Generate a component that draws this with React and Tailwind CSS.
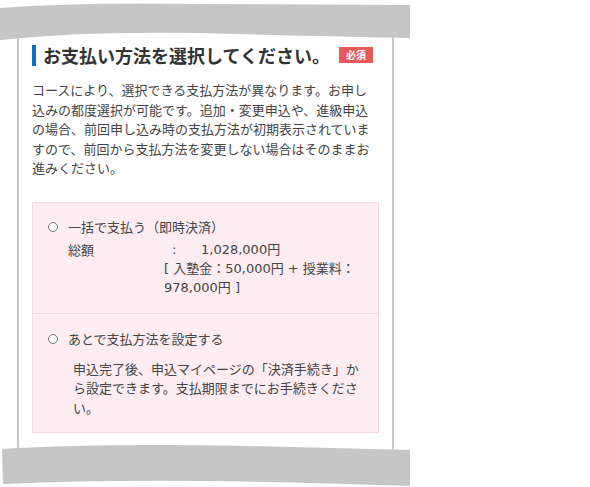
export default function App() {
  const font = { fontFamily: '"Noto Sans CJK JP", "Noto Sans", sans-serif' };
  const num = { fontFamily: '"DejaVu Sans", "Noto Sans CJK JP", sans-serif' };
  return (
    <div className="relative w-[590px] h-[487px] bg-white overflow-hidden" style={font}>
      <div className="ml-[17px] mt-[20px] w-[377px] h-[440px] border-x-2 border-[#c8c8c8] px-[13px] pt-[24px]">
        <div className="flex items-center h-[22px]">
          <div className="w-[4px] h-[21px] bg-[#0a72c4]" />
          <div className="ml-[7px] text-[18px] leading-[22px] font-bold text-[#333333] whitespace-nowrap">
            お支払い方法を選択してください。
          </div>
          <div className="ml-[9px] w-[34px] h-[16px] bg-[#e85a5a] text-white text-[10px] font-bold leading-[16px] text-center">
            必須
          </div>
        </div>
        <p className="mt-[14px] text-[13px] leading-[19.5px] text-[#444444]">
          コースにより、選択できる支払方法が異なります。お申し込みの都度選択が可能です。追加・変更申込や、進級申込の場合、前回申し込み時の支払方法が初期表示されていますので、前回から支払方法を変更しない場合はそのままお進みください。
        </p>
        <div className="mt-[24px] border border-[#efd9df] bg-[#fdedf2] text-[13px] text-[#444444]">
          <div className="pt-[14px] pb-[16px] pl-[15px]">
            <div className="flex items-center h-[20px]">
              <div className="w-[10px] h-[10px] rounded-full border border-[#777777] bg-white" />
              <span className="ml-[10px] leading-[20px]">一括で支払う（即時決済）</span>
            </div>
            <div className="flex mt-[3px] pl-[20px] leading-[19px]">
              <span className="w-[96px] shrink-0">総額</span>
              <div className="whitespace-pre" style={num}>
                <div>
                  <span className="inline-block w-[37px] pl-[8px]">:</span>1,028,000円
                </div>
                <div>[ 入塾金：50,000円 + 授業料：</div>
                <div>978,000円 ]</div>
              </div>
            </div>
          </div>
          <div className="border-t border-[#efd9df] pt-[15px] pb-[15px] pl-[15px]">
            <div className="flex items-center h-[20px]">
              <div className="w-[10px] h-[10px] rounded-full border border-[#777777] bg-white" />
              <span className="ml-[10px] leading-[20px]">あとで支払方法を設定する</span>
            </div>
            <p className="mt-[10px] ml-[25px] w-[290px] leading-[19.5px]">
              申込完了後、申込マイページの「決済手続き」から設定できます。支払期限までにお手続きください。
            </p>
          </div>
        </div>
      </div>
      <svg className="absolute left-0 top-0" width="420" height="45" viewBox="0 0 420 45">
        <path d="M0,8 Q80,2 200,4 L410,5 L410,38 Q300,36 200,33 Q80,31 0,40 Z" fill="#c6c6c6" />
      </svg>
      <svg className="absolute left-0 top-[440px]" width="420" height="47" viewBox="0 440 420 47">
        <path d="M2,449 Q100,443 250,446 Q330,448 410,450 L410,486 Q300,482 200,481 Q100,480 3,484 Z" fill="#c6c6c6" />
      </svg>
    </div>
  );
}
